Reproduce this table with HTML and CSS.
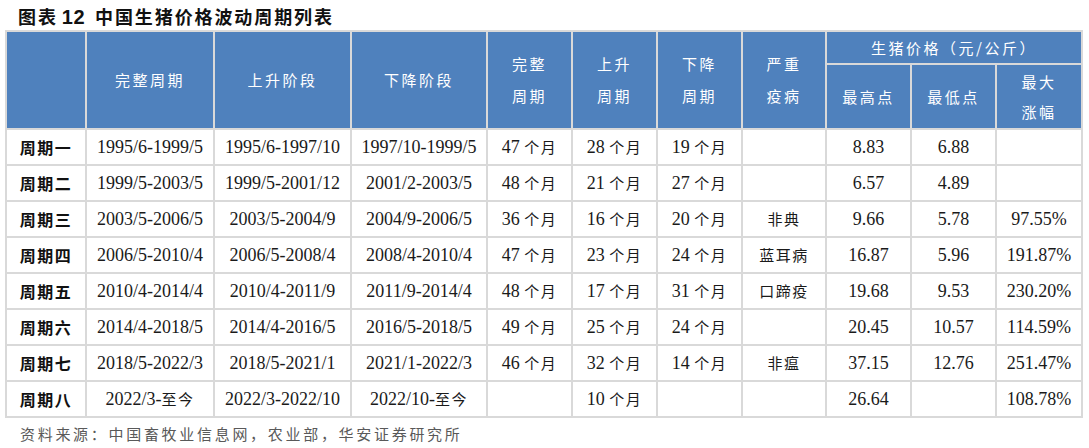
FILE: index.html
```html
<!DOCTYPE html>
<html lang="zh-CN">
<head>
<meta charset="utf-8">
<title>图表 12 中国生猪价格波动周期列表</title>
<link rel="stylesheet" href="styles.css">
</head>
<body>
<div class="page">
  <div class="title"><span class="cjk">图表</span> <span class="num">12</span> <span class="cjk">中国生猪价格波动周期列表</span></div>
  <table class="grid">
    <colgroup>
      <col class="c1"><col class="c2"><col class="c3"><col class="c4">
      <col class="c5"><col class="c6"><col class="c7"><col class="c8">
      <col class="c9"><col class="c10"><col class="c11">
    </colgroup>
    <thead>
      <tr class="h1">
        <th rowspan="2"></th>
        <th rowspan="2">完整周期</th>
        <th rowspan="2">上升阶段</th>
        <th rowspan="2">下降阶段</th>
        <th rowspan="2">完整<br>周期</th>
        <th rowspan="2">上升<br>周期</th>
        <th rowspan="2">下降<br>周期</th>
        <th rowspan="2">严重<br>疫病</th>
        <th colspan="3" class="group">生猪价格（元/公斤）</th>
      </tr>
      <tr class="h2">
        <th>最高点</th>
        <th>最低点</th>
        <th class="tight">最大<br>涨幅</th>
      </tr>
    </thead>
    <tbody>
      <tr><td class="lbl">周期一</td><td>1995/6-1999/5</td><td>1995/6-1997/10</td><td>1997/10-1999/5</td><td>47 <span class="cj">个月</span></td><td>28 <span class="cj">个月</span></td><td>19 <span class="cj">个月</span></td><td></td><td>8.83</td><td>6.88</td><td></td></tr>
      <tr><td class="lbl">周期二</td><td>1999/5-2003/5</td><td>1999/5-2001/12</td><td>2001/2-2003/5</td><td>48 <span class="cj">个月</span></td><td>21 <span class="cj">个月</span></td><td>27 <span class="cj">个月</span></td><td></td><td>6.57</td><td>4.89</td><td></td></tr>
      <tr><td class="lbl">周期三</td><td>2003/5-2006/5</td><td>2003/5-2004/9</td><td>2004/9-2006/5</td><td>36 <span class="cj">个月</span></td><td>16 <span class="cj">个月</span></td><td>20 <span class="cj">个月</span></td><td><span class="cj">非典</span></td><td>9.66</td><td>5.78</td><td>97.55%</td></tr>
      <tr><td class="lbl">周期四</td><td>2006/5-2010/4</td><td>2006/5-2008/4</td><td>2008/4-2010/4</td><td>47 <span class="cj">个月</span></td><td>23 <span class="cj">个月</span></td><td>24 <span class="cj">个月</span></td><td><span class="cj">蓝耳病</span></td><td>16.87</td><td>5.96</td><td>191.87%</td></tr>
      <tr><td class="lbl">周期五</td><td>2010/4-2014/4</td><td>2010/4-2011/9</td><td>2011/9-2014/4</td><td>48 <span class="cj">个月</span></td><td>17 <span class="cj">个月</span></td><td>31 <span class="cj">个月</span></td><td><span class="cj">口蹄疫</span></td><td>19.68</td><td>9.53</td><td>230.20%</td></tr>
      <tr><td class="lbl">周期六</td><td>2014/4-2018/5</td><td>2014/4-2016/5</td><td>2016/5-2018/5</td><td>49 <span class="cj">个月</span></td><td>25 <span class="cj">个月</span></td><td>24 <span class="cj">个月</span></td><td></td><td>20.45</td><td>10.57</td><td>114.59%</td></tr>
      <tr><td class="lbl">周期七</td><td>2018/5-2022/3</td><td>2018/5-2021/1</td><td>2021/1-2022/3</td><td>46 <span class="cj">个月</span></td><td>32 <span class="cj">个月</span></td><td>14 <span class="cj">个月</span></td><td><span class="cj">非瘟</span></td><td>37.15</td><td>12.76</td><td>251.47%</td></tr>
      <tr><td class="lbl">周期八</td><td>2022/3-<span class="cj">至今</span></td><td>2022/3-2022/10</td><td>2022/10-<span class="cj">至今</span></td><td></td><td>10 <span class="cj">个月</span></td><td></td><td></td><td>26.64</td><td></td><td>108.78%</td></tr>
    </tbody>
  </table>
  <div class="source">资料来源：中国畜牧业信息网，农业部，华安证券研究所</div>
</div>
</body>
</html>
```

FILE: styles.css
```css
html, body {
  margin: 0;
  padding: 0;
  background: #ffffff;
}

.page {
  width: 1089px;
  height: 448px;
  padding-left: 5px;
  box-sizing: border-box;
}

.title {
  height: 30px;
  line-height: 32px;
  padding-left: 13px;
  font-weight: bold;
  color: #111111;
  white-space: nowrap;
}

.title .cjk {
  font-family: "Noto Sans CJK SC", sans-serif;
  font-size: 18px;
  letter-spacing: 1.9px;
}

.title .num {
  font-family: "Liberation Sans", Arial, sans-serif;
  font-size: 20px;
  letter-spacing: 0.5px;
  margin-right: 6px;
}

.grid {
  border-collapse: collapse;
  table-layout: fixed;
  width: 1078px;
}

.grid th,
.grid td {
  border: 2px solid #d9d9d9;
  padding: 0;
  text-align: center;
  vertical-align: middle;
  overflow: hidden;
  white-space: nowrap;
}

.c1 { width: 80px; }
.c2 { width: 128px; }
.c3 { width: 137px; }
.c4 { width: 136px; }
.c5 { width: 85px; }
.c6 { width: 85px; }
.c7 { width: 85px; }
.c8 { width: 84px; }
.c9 { width: 85px; }
.c10 { width: 85px; }
.c11 { width: 86px; }

.grid th {
  background: #4f81bd;
  color: #ffffff;
  font-family: "Noto Sans CJK SC", sans-serif;
  font-weight: normal;
  font-size: 15px;
  letter-spacing: 2.5px;
  line-height: 32px;
}

.grid th.tight {
  line-height: 30px;
}

.grid tr.h1 {
  height: 33px;
}

.grid tr.h2 {
  height: 65px;
}

.grid th.group {
  line-height: 28px;
}

.grid td {
  height: 34px;
  font-family: "Liberation Serif", "Times New Roman", serif;
  font-size: 18px;
  color: #1a1a1a;
}

.grid td .cj {
  font-family: "Noto Sans CJK SC", sans-serif;
  font-size: 15px;
  letter-spacing: 1.5px;
}

.grid td.lbl {
  font-family: "Noto Sans CJK SC", sans-serif;
  font-weight: bold;
  font-size: 16px;
  letter-spacing: 1.5px;
  color: #111111;
}

.source {
  padding-left: 15px;
  margin-top: 5px;
  font-family: "Noto Sans CJK SC", sans-serif;
  font-size: 15px;
  letter-spacing: 2.7px;
  color: #595959;
  line-height: 22px;
  white-space: nowrap;
}
```
